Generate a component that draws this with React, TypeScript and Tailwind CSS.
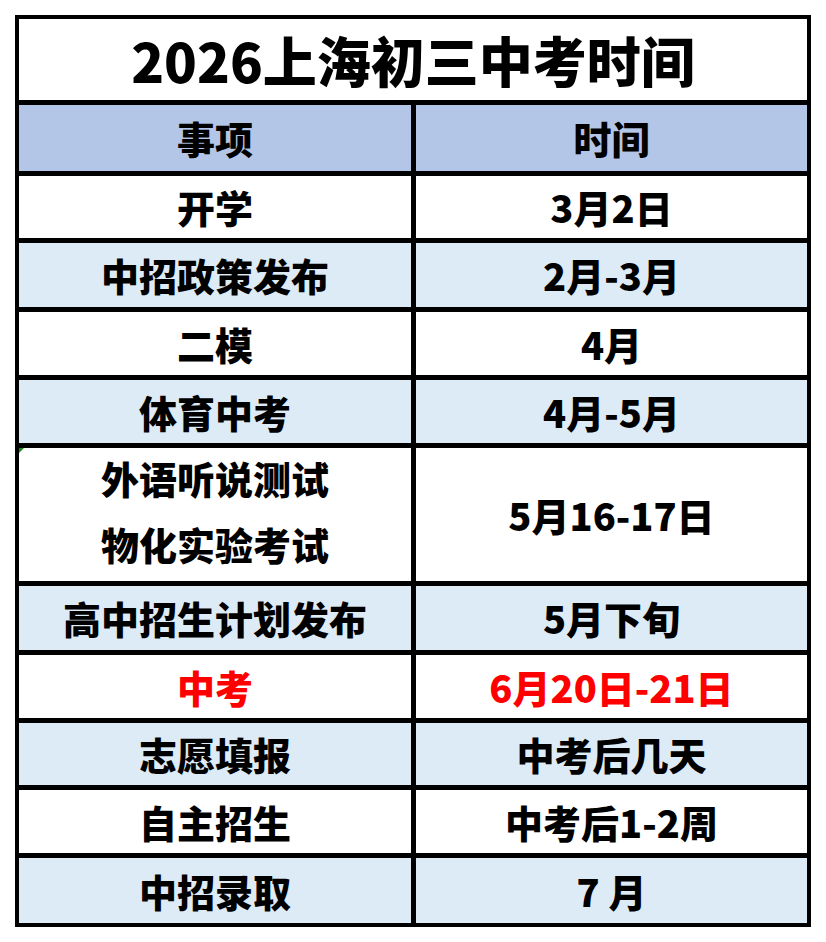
const font = { fontFamily: '"Noto Sans CJK SC", "Noto Sans", sans-serif' };

interface Row {
    item: string[];
    time: string;
    h: string;
    striped: boolean;
    red?: boolean;
    mark?: boolean;
}

const rows: Row[] = [
    { item: ["开学"], time: "3月2日", h: "h-[62px]", striped: false },
    { item: ["中招政策发布"], time: "2月-3月", h: "h-[64px]", striped: true },
    { item: ["二模"], time: "4月", h: "h-[63px]", striped: false },
    { item: ["体育中考"], time: "4月-5月", h: "h-[63px]", striped: true },
    { item: ["外语听说测试", "物化实验考试"], time: "5月16-17日", h: "h-[133px]", striped: false, mark: true },
    { item: ["高中招生计划发布"], time: "5月下旬", h: "h-[64px]", striped: true },
    { item: ["中考"], time: "6月20日-21日", h: "h-[63px]", striped: false, red: true },
    { item: ["志愿填报"], time: "中考后几天", h: "h-[62px]", striped: true },
    { item: ["自主招生"], time: "中考后1-2周", h: "h-[63px]", striped: false },
    { item: ["中招录取"], time: "7 月", h: "h-[65px]", striped: true },
];

export default function App() {
    return (
        <div className="min-h-[942px] w-[826px] bg-white pl-[15px] pt-[15px]" style={font}>
            <div className="flex w-[796px] flex-col gap-[5px] bg-black p-[4px]">
                {/* Title */}
                <div className="flex h-[81px] items-center justify-center bg-white text-[54px] font-black leading-none text-black">
                    2026上海初三中考时间
                </div>

                {/* Header */}
                <div className="grid h-[66px] grid-cols-[392px_391px] grid-rows-1 gap-x-[5px] overflow-hidden">
                    <div className="flex items-center justify-center bg-[#b4c6e7] text-[38px] font-black leading-none text-black">事项</div>
                    <div className="flex items-center justify-center bg-[#b4c6e7] text-[38px] font-black leading-none text-black">时间</div>
                </div>

                {rows.map((r) => (
                    <div key={r.time} className={`grid grid-cols-[392px_391px] grid-rows-1 gap-x-[5px] overflow-hidden ${r.h}`}>
                        <div
                            className={`relative flex flex-col items-center justify-center text-[38px] font-black ${
                                r.mark ? "pb-[8px] leading-[66px]" : "leading-none"
                            } ${r.striped ? "bg-[#ddebf7]" : "bg-white"} ${r.red ? "text-[#ff0000]" : "text-black"}`}
                        >
                            {r.mark && (
                                <div className="absolute left-[-2px] top-0 h-0 w-0 border-r-[7px] border-t-[7px] border-r-transparent border-t-[#1a8a1a]" />
                            )}
                            {r.item.map((t) => (
                                <span key={t}>{t}</span>
                            ))}
                        </div>
                        <div
                            className={`flex items-center justify-center text-[38px] font-black leading-none ${
                                r.striped ? "bg-[#ddebf7]" : "bg-white"
                            } ${r.red ? "text-[#ff0000]" : "text-black"}`}
                        >
                            {r.time}
                        </div>
                    </div>
                ))}
            </div>
        </div>
    );
}
